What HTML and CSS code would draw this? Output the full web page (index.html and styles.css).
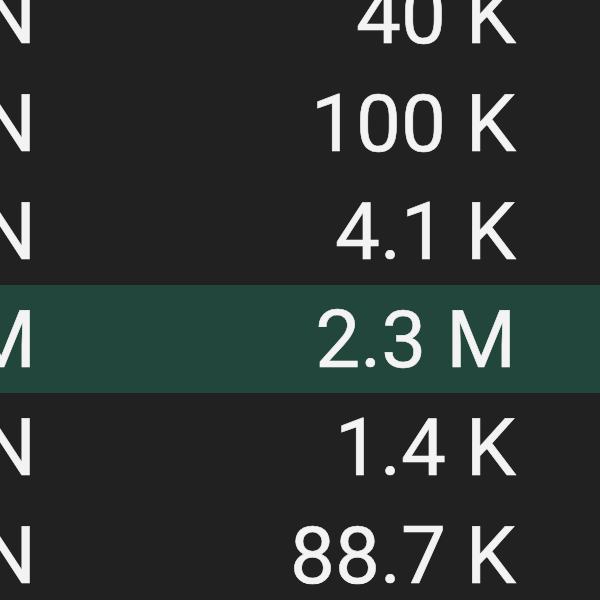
FILE: index.html
```html
<!DOCTYPE html>
<html lang="en">
<head>
    <meta charset="UTF-8">
    <meta name="viewport" content="width=device-width, initial-scale=1.0">
    <title>Volume</title>
    <link rel="stylesheet" href="styles.css">
</head>
<body>
    <div class="table">
        <div class="row"><div class="cell name">N</div><div class="cell value">40 K</div></div>
        <div class="row"><div class="cell name">N</div><div class="cell value">100 K</div></div>
        <div class="row"><div class="cell name">N</div><div class="cell value">4.1 K</div></div>
        <div class="row selected"><div class="cell name">M</div><div class="cell value">2.3 M</div></div>
        <div class="row"><div class="cell name">N</div><div class="cell value">1.4 K</div></div>
        <div class="row"><div class="cell name">N</div><div class="cell value">88.7 K</div></div>
    </div>
</body>
</html>
```

FILE: styles.css
```css
body {
    margin: 0;
    padding: 0;
    background: #212121;
    color: #f3f3f3;
    font-family: Roboto, "Noto Sans", sans-serif;
    overflow: hidden;
}
.table {
    margin-top: -39px;
}
.row {
    display: flex;
    height: 108px;
    font-size: 80px;
    white-space: nowrap;
    -webkit-text-stroke: 0.6px #f3f3f3;
}
.row.selected {
    background: #22463b;
}
.cell {
    line-height: 110px;
}
.cell.name {
    width: 200px;
    margin-left: -164px;
    text-align: right;
}
.cell.value {
    flex: 1;
    text-align: right;
    padding-right: 84px;
}
```
